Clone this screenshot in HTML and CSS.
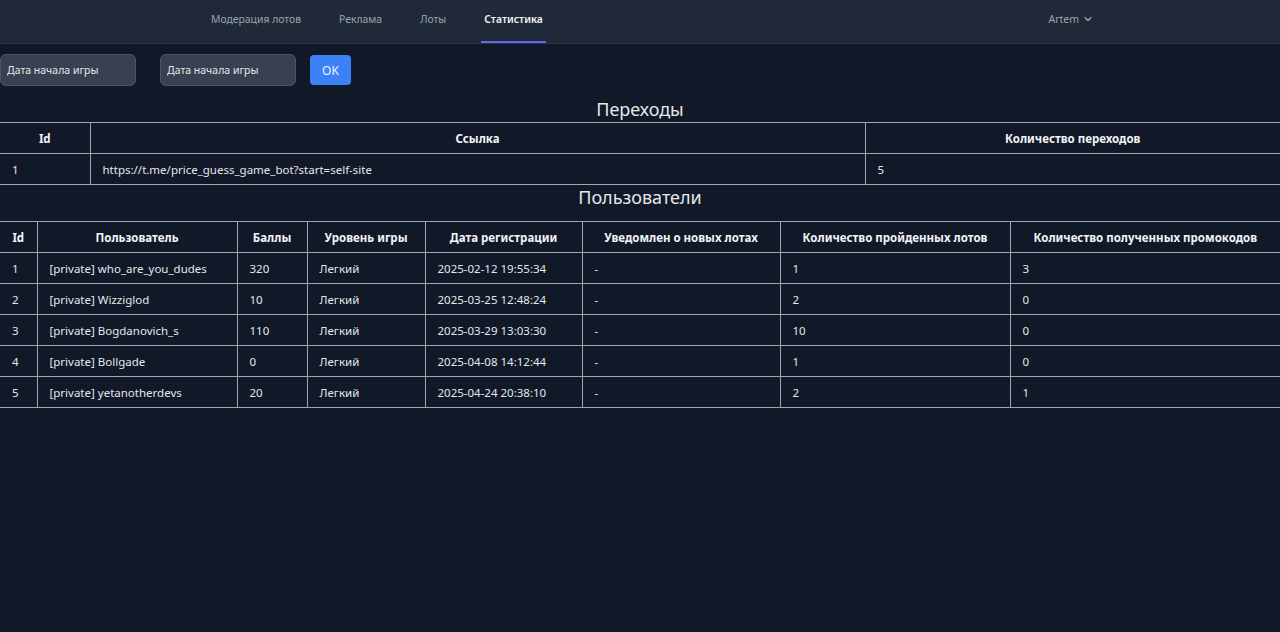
FILE: index.html
```html
<!DOCTYPE html>
<html lang="ru">
<head>
<meta charset="utf-8">
<title>Статистика</title>
<link rel="stylesheet" href="styles.css">
</head>
<body>
<header class="nav">
  <nav class="tabs">
    <a class="tab">Модерация лотов</a>
    <a class="tab">Реклама</a>
    <a class="tab">Лоты</a>
    <a class="tab active">Статистика</a>
  </nav>
  <div class="user">Artem
    <svg class="chev" width="8" height="6" viewBox="0 0 8 6"><path d="M1 1.5 L4 4.5 L7 1.5" fill="none" stroke="#9ca3af" stroke-width="1.4" stroke-linecap="round" stroke-linejoin="round"/></svg>
  </div>
</header>

<div class="filters">
  <input class="date" type="text" placeholder="Дата начала игры">
  <input class="date second" type="text" placeholder="Дата начала игры">
  <button class="ok">OK</button>
</div>

<h2 class="title t1">Переходы</h2>
<table class="grid">
  <colgroup><col class="c-id"><col class="c-link"><col></colgroup>
  <thead><tr><th>Id</th><th>Ссылка</th><th>Количество переходов</th></tr></thead>
  <tbody><tr><td>1</td><td>https://t.me/price_guess_game_bot?start=self-site</td><td>5</td></tr></tbody>
</table>

<h2 class="title t2">Пользователи</h2>
<table class="grid">
  <colgroup>
    <col class="u1"><col class="u2"><col class="u3"><col class="u4"><col class="u5"><col class="u6"><col class="u7"><col>
  </colgroup>
  <thead><tr>
    <th>Id</th><th>Пользователь</th><th>Баллы</th><th>Уровень игры</th><th>Дата регистрации</th><th>Уведомлен о новых лотах</th><th>Количество пройденных лотов</th><th>Количество полученных промокодов</th>
  </tr></thead>
  <tbody>
    <tr><td>1</td><td>[private] who_are_you_dudes</td><td>320</td><td>Легкий</td><td>2025-02-12 19:55:34</td><td>-</td><td>1</td><td>3</td></tr>
    <tr><td>2</td><td>[private] Wizziglod</td><td>10</td><td>Легкий</td><td>2025-03-25 12:48:24</td><td>-</td><td>2</td><td>0</td></tr>
    <tr><td>3</td><td>[private] Bogdanovich_s</td><td>110</td><td>Легкий</td><td>2025-03-29 13:03:30</td><td>-</td><td>10</td><td>0</td></tr>
    <tr><td>4</td><td>[private] Bollgade</td><td>0</td><td>Легкий</td><td>2025-04-08 14:12:44</td><td>-</td><td>1</td><td>0</td></tr>
    <tr><td>5</td><td>[private] yetanotherdevs</td><td>20</td><td>Легкий</td><td>2025-04-24 20:38:10</td><td>-</td><td>2</td><td>1</td></tr>
  </tbody>
</table>
</body>
</html>
```
FILE: styles.css
```css
html, body {
  margin: 0;
  padding: 0;
  background: #111827;
  color: #e5e7eb;
  font-family: "Noto Sans", "Open Sans", sans-serif;
  min-height: 632px;
}
.nav {
  height: 43px;
  background: #1f2937;
  border-bottom: 1px solid #2d3748;
  display: flex;
  align-items: stretch;
  padding-left: 211px;
  padding-right: 188px;
}
.tabs {
  display: flex;
  gap: 38px;
  flex: 1;
}
.tab {
  display: flex;
  align-items: center;
  padding-bottom: 4px;
  font-size: 10.4px;
  color: #9ca3af;
  border-bottom: 2px solid transparent;
}
.tab.active {
  color: #f3f4f6;
  font-weight: 600;
  border-bottom-color: #6366f1;
  padding-left: 3px;
  padding-right: 3px;
  margin-left: -3px;
}
.user {
  display: flex;
  align-items: center;
  gap: 5px;
  padding-bottom: 5px;
  font-size: 10.5px;
  color: #9ca3af;
}
.filters {
  display: flex;
  align-items: center;
  padding-top: 10px;
  height: 32px;
}
.date {
  box-sizing: border-box;
  width: 136px;
  height: 32px;
  background: #374151;
  border: 1px solid #4b5563;
  border-radius: 6px;
  color: #e5e7eb;
  font-family: inherit;
  font-size: 10.5px;
  padding: 0 6px;
  outline: none;
}
.date::placeholder { color: #e5e7eb; }
.second { margin-left: 24px; }
.ok {
  margin-left: 14px;
  width: 41px;
  height: 30px;
  background: #3b82f6;
  border: none;
  border-radius: 4px;
  color: #eef2ff;
  font-family: inherit;
  font-size: 12px;
}
.title {
  margin: 0;
  text-align: center;
  font-weight: 400;
  font-size: 18px;
  color: #e5e7eb;
  line-height: 24px;
}
.t1 { margin-top: 11px; height: 25px; }
.t2 { margin-top: 0; height: 36px; }
.grid {
  width: 100%;
  border-collapse: collapse;
  table-layout: fixed;
  font-size: 11.5px;
}
.grid th, .grid td {
  border: 1px solid #a0a6b0;
  height: 30px;
  padding: 0 12px;
  white-space: nowrap;
  color: #e5e7eb;
}
.grid th:first-child, .grid td:first-child { border-left: none; }
.grid th:last-child, .grid td:last-child { border-right: none; }
.grid th {
  font-weight: 700;
  text-align: center;
  color: #f3f4f6;
}
.grid td { text-align: left; }
.c-id { width: 90px; }
.c-link { width: 775px; }
.u1 { width: 37px; }
.u2 { width: 200px; }
.u3 { width: 70px; }
.u4 { width: 118px; }
.u5 { width: 157px; }
.u6 { width: 198px; }
.u7 { width: 230px; }
```
